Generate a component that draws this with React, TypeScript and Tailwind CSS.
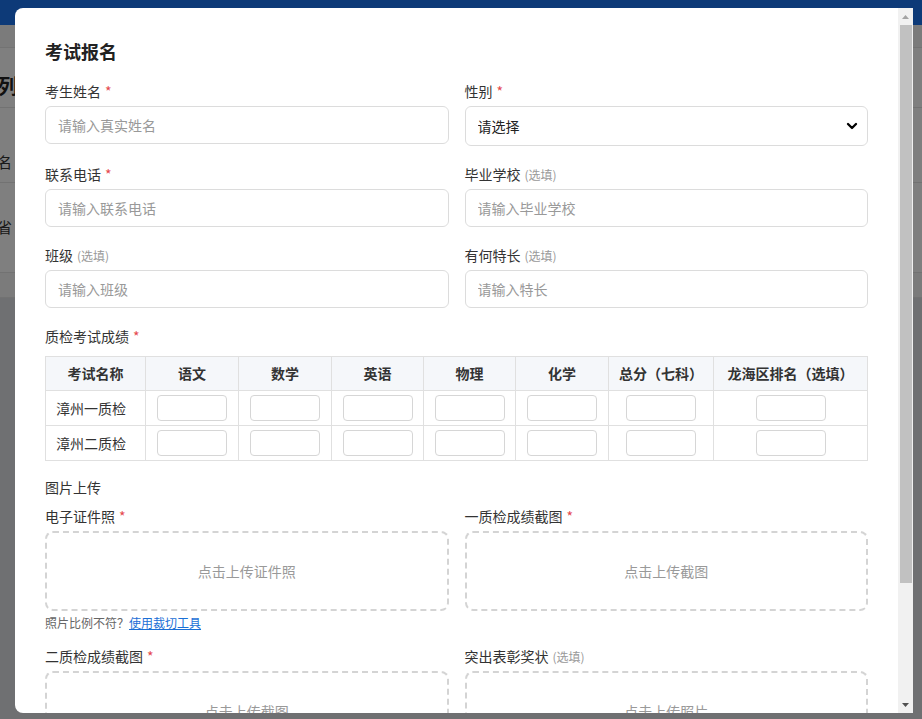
import { ChevronDown } from 'lucide-react';

const subjects = ['语文', '数学', '英语', '物理', '化学', '总分（七科）', '龙海区排名（选填）'];
const colWidths = ['w-[100px]', 'w-[93px]', 'w-[93px]', 'w-[92px]', 'w-[92px]', 'w-[93px]', 'w-[105px]', ''];
const exams = ['漳州一质检', '漳州二质检'];

function FieldLabel({ text, required, optional }: { text: string; required?: boolean; optional?: boolean }) {
  return (
    <div className="mb-[5px] h-5 text-[14px] leading-5 text-[#333]">
      {text}
      {required && <span className="ml-1 text-[#e5484d]">*</span>}
      {optional && <span className="ml-1 text-[12px] text-[#999]">(选填)</span>}
    </div>
  );
}

function TextField({ label, placeholder, required, optional }: { label: string; placeholder: string; required?: boolean; optional?: boolean }) {
  return (
    <div>
      <FieldLabel text={label} required={required} optional={optional} />
      <input
        placeholder={placeholder}
        className="block h-[38px] w-full rounded-md border border-[#dcdcdc] px-3 text-[14px] text-[#333] outline-none placeholder:text-[#999]"
      />
    </div>
  );
}

function UploadBox({ label, text, required, optional, hint }: { label: string; text: string; required?: boolean; optional?: boolean; hint?: boolean }) {
  return (
    <div>
      <div className="mb-[4px]">
        <FieldLabel text={label} required={required} optional={optional} />
      </div>
      <div className="flex h-[80px] items-center justify-center rounded-lg border-2 border-dashed border-[#d4d4d4] text-[14px] text-[#999]">
        {text}
      </div>
      {hint && (
        <div className="mt-[4px] text-[12px] leading-4 text-[#666]">
          照片比例不符？<a className="text-[#1a6fd6] underline">使用裁切工具</a>
        </div>
      )}
    </div>
  );
}

function ScoreTable() {
  return (
    <table className="w-full border-collapse text-[14px] text-[#333]">
      <thead>
        <tr className="h-[34px] bg-[#f5f7fa]">
          <th className={`border border-[#e0e0e0] font-bold ${colWidths[0]}`}>考试名称</th>
          {subjects.map((s, i) => (
            <th key={s} className={`border border-[#e0e0e0] font-bold ${colWidths[i + 1]}`}>
              {s}
            </th>
          ))}
        </tr>
      </thead>
      <tbody>
        {exams.map((e) => (
          <tr key={e} className="h-[35px]">
            <td className="border border-[#e0e0e0] px-[10px] text-[#333]">{e}</td>
            {subjects.map((s) => (
              <td key={s} className="border border-[#e0e0e0]">
                <input className="mx-auto block h-[26px] w-[70px] rounded-[4px] border border-[#d6d6d6] outline-none" />
              </td>
            ))}
          </tr>
        ))}
      </tbody>
    </table>
  );
}

// classic scrollbar drawn next to the dialog body
function ScrollBar() {
  return (
    <div className="flex w-[15px] shrink-0 flex-col bg-[#f1f1f1]">
      <div className="flex h-[17px] items-center justify-center">
        <svg width="7" height="4" viewBox="0 0 7 4">
          <path d="M0 4 L3.5 0 L7 4 Z" fill="#a3a3a3" />
        </svg>
      </div>
      <div className="flex-1 pl-[2px] pr-[1px]">
        <div className="h-[558px] bg-[#c1c1c1]" />
      </div>
      <div className="flex h-[17px] items-center justify-center">
        <svg width="7" height="4" viewBox="0 0 7 4">
          <path d="M0 0 L7 0 L3.5 4 Z" fill="#505050" />
        </svg>
      </div>
    </div>
  );
}

export default function App() {
  return (
    <div className="relative h-screen w-full overflow-hidden bg-[#dfe1e5] font-['Noto_Sans_CJK_SC',sans-serif]">
      {/* page underneath the dialog */}
      <div className="h-[25px] bg-[#1a74f0]" />
      <div className="h-[23px] border-b border-[#e6e6e6] bg-[#f6f6f6]" />
      <div className="bg-white">
        <div className="flex h-[60px] items-end border-b border-[#e4e4e4] pb-[6px] text-[20px] font-bold text-[#222]">
          <span className="-ml-[2px]">列表</span>
        </div>
        <div className="flex h-[75px] items-end border-b border-[#e4e4e4] pb-[9px] text-[15px] text-[#333]">
          <span className="-ml-[3px]">名</span>
        </div>
        <div className="flex h-[90px] items-start border-b border-[#e4e4e4] pt-[33px] text-[15px] text-[#333]">
          <span className="-ml-[3px]">省</span>
        </div>
        <div className="h-[25px] border-b border-[#e4e4e4] bg-[#f7f7f7]" />
      </div>

      <div className="absolute inset-0 bg-black/50" />

      {/* dialog */}
      <div className="absolute left-[15px] top-[8px] flex h-[705px] w-[898px] overflow-hidden rounded-l-lg bg-white">
        <div className="min-w-0 flex-1 overflow-y-auto [scrollbar-width:none]">
          <div className="px-[30px] pb-[30px] pt-[29px]">
            <h2 className="mb-[16px] text-[18px] font-bold leading-7 text-[#222]">考试报名</h2>

            <div className="grid grid-cols-2 gap-x-4 gap-y-[18px]">
              <TextField label="考生姓名" placeholder="请输入真实姓名" required />
              <div>
                <FieldLabel text="性别" required />
                <div className="relative">
                  <select className="block h-[40px] w-full appearance-none rounded-md border border-[#dcdcdc] bg-white px-3 text-[14px] text-[#222] outline-none">
                    <option>请选择</option>
                    <option>男</option>
                    <option>女</option>
                  </select>
                  <ChevronDown className="pointer-events-none absolute right-[8px] top-[12px] h-4 w-4 text-black" strokeWidth={3.5} />
                </div>
              </div>
              <TextField label="联系电话" placeholder="请输入联系电话" required />
              <TextField label="毕业学校" placeholder="请输入毕业学校" optional />
              <TextField label="班级" placeholder="请输入班级" optional />
              <TextField label="有何特长" placeholder="请输入特长" optional />
            </div>

            <div className="mt-[18px]">
              <div className="mb-[10px] text-[14px] leading-5 text-[#333]">
                质检考试成绩<span className="ml-1 text-[#e5484d]">*</span>
              </div>
              <ScoreTable />
            </div>

            <div className="mb-[9px] mt-[16px] text-[14px] leading-5 text-[#333]">图片上传</div>
            <div className="grid grid-cols-2 items-start gap-x-4 gap-y-[15px]">
              <UploadBox label="电子证件照" text="点击上传证件照" required hint />
              <UploadBox label="一质检成绩截图" text="点击上传截图" required />
              <UploadBox label="二质检成绩截图" text="点击上传截图" required />
              <UploadBox label="突出表彰奖状" text="点击上传照片" optional />
            </div>

            <div className="mt-[28px] flex justify-end gap-3">
              <button className="h-[38px] rounded-md border border-[#dcdcdc] px-6 text-[14px] text-[#333]">取消</button>
              <button className="h-[38px] rounded-md bg-[#1a6fd6] px-6 text-[14px] text-white">提交报名</button>
            </div>
          </div>
        </div>
        <ScrollBar />
      </div>
    </div>
  );
}
